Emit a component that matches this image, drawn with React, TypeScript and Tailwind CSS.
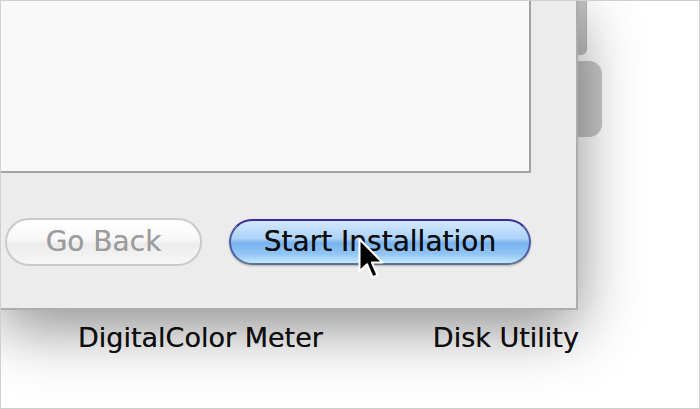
import React from 'react'

const font = { fontFamily: '"DejaVu Sans", "Liberation Sans", sans-serif' }

const Cursor = () => (
    <svg
        className="absolute left-[126px] top-[16px] pointer-events-none"
        width="28"
        height="44"
        viewBox="0 0 13 21"
    >
        <path
            d="M1 1 L1 16.5 L4.6 13 L7.2 19.2 L9.6 18.2 L7 12.2 L12 12.2 Z"
            fill="#000"
            stroke="#fff"
            strokeWidth="1"
            strokeLinejoin="round"
        />
    </svg>
)

const App = () => {
    return (
        <div className="w-[700px] h-[409px] overflow-hidden border border-[#cfcfcf] bg-white" style={font}>
            <div className="flex">
                {/* front window, bottom corner */}
                <div className="relative z-10 w-[577px] h-[309px] shrink-0 bg-[#ececec] border-r-2 border-b-2 border-[#adadad] shadow-[0_18px_58px_rgba(0,0,0,0.45)]">
                    <div className="w-[530px] h-[172px] bg-[#f9f9f9] border-r-2 border-b-2 border-[#a3a3a3]" />
                    <div className="flex items-start gap-[27px] pl-[4px] mt-[45px]">
                        <button className="w-[197px] h-[48px] rounded-full border-2 border-[#cacaca] bg-[linear-gradient(to_bottom,#ffffff_0%,#f7f7f7_45%,#ececec_55%,#f6f6f6_100%)] text-[28px] leading-none text-[#9c9c9c] [text-shadow:0_0_0.5px_rgba(0,0,0,0.3)]">
                            Go Back
                        </button>
                        <button className="relative w-[302px] h-[46px] mt-[1px] rounded-full border-2 border-[#4d5ba6] border-t-[#3a2c9c] border-b-[#61708c] bg-[linear-gradient(to_bottom,#d3e8fc_0%,#acd2f7_42%,#78b2ee_52%,#90c5f5_78%,#c4e8ff_100%)] shadow-[0_1px_2px_rgba(0,0,0,0.25)] text-[28px] leading-none text-[#0d0d0d] [text-shadow:0_0_0.6px_rgba(0,0,0,0.7)]">
                            Start Installation
                            <Cursor />
                        </button>
                    </div>
                </div>

                {/* scroll bar of the window behind */}
                <div className="flex flex-col">
                    <div className="w-[9px] h-[54px] bg-[#c4c4c4] rounded-br-[6px] border-r border-[#b4b4b4]" />
                    <div className="w-[24px] h-[76px] mt-[6px] bg-[#c8c8c8] rounded-r-[13px]" />
                </div>
            </div>

            {/* icon labels in the window behind */}
            <div className="flex gap-[110px] pl-[77px] pt-[14px] text-[27px] leading-none text-[#111] [text-shadow:0_0_0.6px_rgba(0,0,0,0.7)]">
                <span>DigitalColor Meter</span>
                <span>Disk Utility</span>
            </div>
        </div>
    )
}

export default App
